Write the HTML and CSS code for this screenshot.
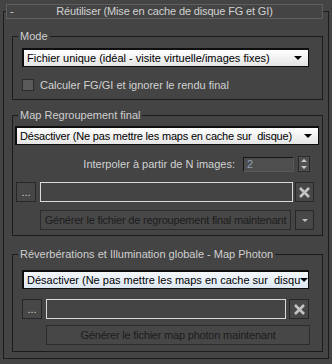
FILE: index.html
```html
<html>

<head>
  <title>Réutiliser</title>
  <link rel="stylesheet" href="styles.css">
</head>

<body>
  <div class="rollout">
    <div class="rollout-head">
      <span class="toggle">-</span>
      <span class="rollout-title">Réutiliser (Mise en cache de disque FG et GI)</span>
    </div>

    <fieldset class="group group-mode">
      <legend>Mode</legend>
      <div class="combo combo-mode">
        <span>Fichier unique (idéal - visite virtuelle/images fixes)</span>
        <i class="arrow"></i>
      </div>
      <label class="check"><span class="box"></span>Calculer FG/GI et ignorer le rendu final</label>
    </fieldset>

    <fieldset class="group group-fg">
      <legend>Map Regroupement final</legend>
      <div class="combo combo-fg">
        <span>Désactiver (Ne pas mettre les maps en cache sur &nbsp;disque)</span>
        <i class="arrow"></i>
      </div>
      <div class="row row-interp">
        <span class="label">Interpoler à partir de N images:</span>
        <span class="num">2</span>
        <span class="spinner"><i class="up"></i><i class="down"></i></span>
      </div>
      <div class="row row-file">
        <button class="btn-dots">...</button>
        <span class="path"></span>
        <button class="btn-x"><svg width="13" height="13" viewBox="0 0 13 13"><path d="M2 2 L11 11 M11 2 L2 11" stroke="#c4c4c4" stroke-width="2.6"/></svg></button>
      </div>
      <div class="row row-gen">
        <button class="btn-gen">Générer le fichier de regroupement final maintenant</button>
        <button class="btn-drop"><i class="arrow-small"></i></button>
      </div>
    </fieldset>

    <fieldset class="group group-ph">
      <legend>Réverbérations et Illumination globale - Map Photon</legend>
      <div class="combo combo-ph">
        <span>Désactiver (Ne pas mettre les maps en cache sur &nbsp;disqu</span>
        <i class="arrow"></i>
      </div>
      <div class="row row-file">
        <button class="btn-dots">...</button>
        <span class="path"></span>
        <button class="btn-x"><svg width="13" height="13" viewBox="0 0 13 13"><path d="M2 2 L11 11 M11 2 L2 11" stroke="#c4c4c4" stroke-width="2.6"/></svg></button>
      </div>
      <div class="row row-gen">
        <button class="btn-gen">Générer le fichier map photon maintenant</button>
      </div>
    </fieldset>
  </div>
</body>

</html>
```

FILE: styles.css
```css
body {
  margin: 0;
  background-color: #444444;
  font-family: "Liberation Sans", Arial, sans-serif;
  font-size: 11px;
  color: #d2d2d2;
}

.rollout {
  margin: 11px 3px 0 3px;
  border: 1px solid #1c1c1c;
  height: 346px;
}

.rollout-head {
  margin: -8px 5px 0 2px;
  height: 13px;
  border: 1px solid #5e5e5e;
  background-color: #444444;
  display: grid;
  grid-template-columns: 20px 1fr 20px;
  align-items: center;
  line-height: 13px;
}

.toggle {
  padding-left: 3px;
}

.rollout-title {
  text-align: center;
  letter-spacing: -0.15px;
  white-space: nowrap;
}

.group {
  margin: 0 5px 0 8px;
  padding: 0;
  border: 1px solid #1c1c1c;
  min-width: 0;
}

.group>legend {
  margin-left: 5px;
  padding: 0 2px;
  line-height: 13px;
  color: #cfcfcf;
}

.group-mode {
  margin-top: 11px;
  padding-bottom: 8px;
}

.group-fg {
  margin-top: 9px;
  padding-bottom: 5px;
}

.group-ph {
  margin-top: 12px;
  padding-bottom: 6px;
}

/* listes deroulantes */
.combo {
  box-sizing: border-box;
  height: 19px;
  display: flex;
  align-items: center;
  justify-content: space-between;
  padding: 0 6px 0 3px;
  border: 1px solid #0e0e0e;
  border-top-width: 2px;
  border-left-width: 2px;
  background: linear-gradient(#ffffff, #e4e4e4);
  color: #000;
  white-space: nowrap;
  overflow: hidden;
}

.combo-mode {
  margin: 5px 0 0 9px;
  width: 287px;
}

.combo-fg {
  margin: 4px 0 0 2px;
  width: 304px;
  letter-spacing: -0.2px;
}

.combo-ph {
  margin: 9px 0 0 9px;
  width: 287px;
  background: linear-gradient(#f4f8fc, #dce6f1);
}

.arrow {
  border-left: 4px solid transparent;
  border-right: 4px solid transparent;
  border-top: 4px solid #000;
  flex: none;
}

.check {
  display: flex;
  align-items: center;
  gap: 6px;
  margin: 12px 0 0 9px;
  height: 12px;
}

.check>.box {
  box-sizing: border-box;
  width: 12px;
  height: 12px;
  border: 1px solid #2c2c2c;
  background-color: #5a5a5a;
}

.row {
  display: flex;
  align-items: center;
}

.row-interp {
  justify-content: flex-end;
  margin: 11px 12px 0 0;
  height: 16px;
}

.row-interp>.label {
  margin-right: 8px;
}

.num {
  box-sizing: border-box;
  width: 51px;
  height: 15px;
  border: 1px solid #161616;
  border-right-color: #5a5a5a;
  border-bottom-color: #5a5a5a;
  background-color: #4e4e4e;
  color: #8fa0b8;
  padding-left: 3px;
  line-height: 13px;
  margin-right: 4px;
}

.spinner {
  box-sizing: border-box;
  width: 12px;
  height: 16px;
  border: 1px solid #2a2a2a;
  background-color: #505050;
  display: flex;
  flex-direction: column;
  align-items: center;
  justify-content: space-around;
}

.spinner>.up {
  border-left: 3px solid transparent;
  border-right: 3px solid transparent;
  border-bottom: 3px solid #c8c8c8;
}

.spinner>.down {
  border-left: 3px solid transparent;
  border-right: 3px solid transparent;
  border-top: 3px solid #c8c8c8;
}

button {
  font-family: inherit;
  font-size: 11px;
  padding: 0;
  margin: 0;
  box-sizing: border-box;
  height: 20px;
  border: 1px solid #262626;
  background-color: #474747;
  color: #d0d0d0;
}

.btn-dots {
  width: 20px;
  line-height: 12px;
}

.btn-x {
  display: flex;
  align-items: center;
  justify-content: center;
}

.path {
  box-sizing: border-box;
  height: 20px;
  border: 1px solid #dadada;
  background-color: #444444;
}

.group-fg .row-file {
  margin-top: 10px;
}

.group-fg .btn-dots {
  margin-left: 3px;
}

.group-fg .path {
  width: 253px;
  margin: 0 2px 0 4px;
}

.group-fg .btn-x {
  width: 19px;
}

.row-gen>.btn-gen {
  color: #1c1c1c;
  border-color: #2c2c2c;
  white-space: nowrap;
  overflow: hidden;
  letter-spacing: -0.2px;
}

.group-fg .row-gen {
  margin-top: 8px;
}

.group-fg .btn-gen {
  margin-left: 27px;
  width: 251px;
}

.btn-drop {
  width: 19px;
  margin-left: 4px;
  display: flex;
  align-items: center;
  justify-content: center;
}

.arrow-small {
  border-left: 3px solid transparent;
  border-right: 3px solid transparent;
  border-top: 3px solid #bdbdbd;
}

.group-ph .row-file {
  margin-top: 10px;
}

.group-ph .btn-dots {
  margin-left: 9px;
}

.group-ph .path {
  width: 240px;
  margin: 0 3px 0 4px;
}

.group-ph .btn-x {
  width: 20px;
}

.group-ph .row-gen {
  margin-top: 6px;
}

.group-ph .btn-gen {
  margin-left: 33px;
  width: 264px;
}
```
